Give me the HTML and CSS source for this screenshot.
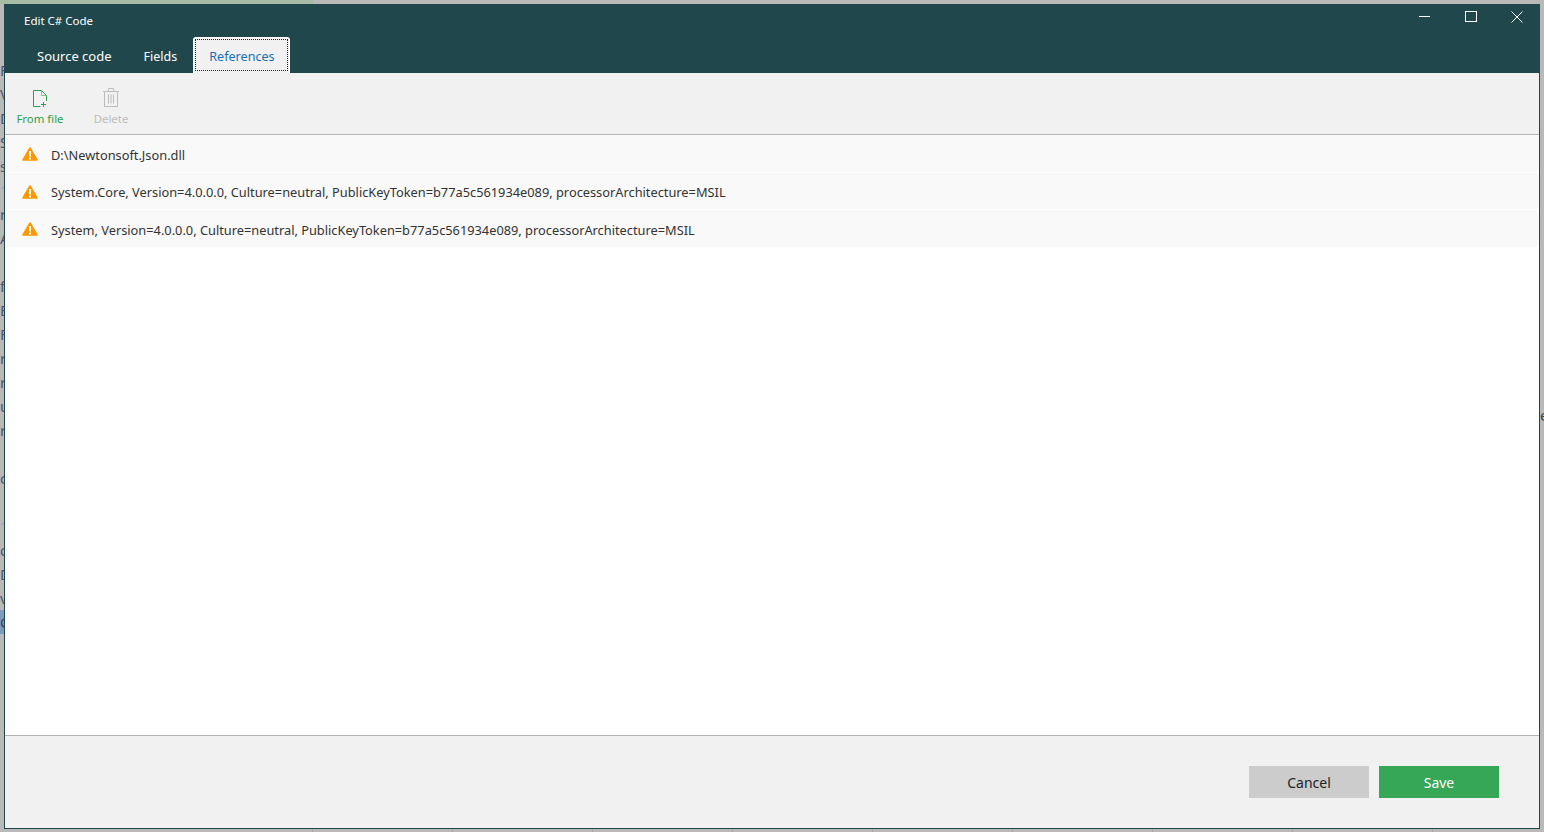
FILE: index.html
```html
<!DOCTYPE html>
<html lang="en">
<head>
<meta charset="utf-8">
<title>Edit C# Code</title>
<link rel="stylesheet" href="styles.css">
</head>
<body>
<div class="backdrop">
  <div class="bd-top"></div>
  <div class="bd-left">
    <span>F</span><span>V</span><span>D</span><span>S</span><span>s</span><span class="faint">1</span><span>r</span><span>A</span><span></span><span>f</span><span>B</span><span>F</span><span>r</span><span>r</span><span>u</span><span>r</span><span></span><span>c</span><span></span><span class="faint">1</span><span>o</span><span>D</span><span>v</span><span class="selected">C</span>
  </div>
  <div class="bd-right">e</div>
  <div class="bd-bottom"></div>
</div>
<div class="window">
  <header class="titlebar">
    <div class="title-row">
      <span class="title">Edit C# Code</span>
      <div class="win-controls">
        <button class="win-btn" aria-label="Minimize"><svg width="12" height="12" viewBox="0 0 12 12"><path d="M0 5.5H11" stroke="#fff" stroke-width="1"/></svg></button>
        <button class="win-btn" aria-label="Maximize"><svg width="12" height="12" viewBox="0 0 12 12"><rect x="0.5" y="0.5" width="11" height="10" fill="none" stroke="#fff" stroke-width="1"/></svg></button>
        <button class="win-btn" aria-label="Close"><svg width="12" height="12" viewBox="0 0 12 12"><path d="M0.5 0.5L11.5 11.5M11.5 0.5L0.5 11.5" stroke="#fff" stroke-width="1"/></svg></button>
      </div>
    </div>
    <nav class="tabs">
      <span class="tab">Source code</span>
      <span class="tab">Fields</span>
      <span class="tab active"><span class="tab-inner">References</span></span>
    </nav>
  </header>
  <div class="toolbar">
    <div class="tool enabled">
      <span class="tool-icon"><svg width="14" height="17" viewBox="0 0 14 17"><path d="M7.5 16.5H.5V.5H8.5L13.5 5.5V11" fill="none" stroke="#2f9e50" stroke-width="1"/><path d="M8.5 .5V5.5H13.5" fill="none" stroke="#2f9e50" stroke-width="1" opacity=".55"/><path d="M8 14.5H13M10.5 12V17" stroke="#2f9e50" stroke-width="1"/></svg></span>
      <span>From file</span>
    </div>
    <div class="tool disabled">
      <span class="tool-icon"><svg width="16" height="19" viewBox="0 0 16 19"><path d="M0 3.5H16M5.5 3.5V.5H10.5V3.5" fill="none" stroke="#bdbdbd"/><rect x="1.5" y="3.5" width="13" height="15" fill="none" stroke="#bdbdbd"/><path d="M5.5 6.5V15.5M8 6.5V15.5M10.5 6.5V15.5" stroke="#bdbdbd"/></svg></span>
      <span>Delete</span>
    </div>
  </div>
  <main class="list">
    <div class="row">
      <svg class="warn" width="16" height="14" viewBox="0 0 16 14"><path d="M8 1L15 13H1Z" fill="#ff9800" stroke="#ff9800" stroke-width="1.6" stroke-linejoin="round"/><rect x="7" y="4" width="2" height="5.5" fill="#fff"/><rect x="7" y="10.5" width="2" height="2" fill="#fff"/></svg>
      <span>D:\Newtonsoft.Json.dll</span>
    </div>
    <div class="row">
      <svg class="warn" width="16" height="14" viewBox="0 0 16 14"><path d="M8 1L15 13H1Z" fill="#ff9800" stroke="#ff9800" stroke-width="1.6" stroke-linejoin="round"/><rect x="7" y="4" width="2" height="5.5" fill="#fff"/><rect x="7" y="10.5" width="2" height="2" fill="#fff"/></svg>
      <span>System.Core, Version=4.0.0.0, Culture=neutral, PublicKeyToken=b77a5c561934e089, processorArchitecture=MSIL</span>
    </div>
    <div class="row">
      <svg class="warn" width="16" height="14" viewBox="0 0 16 14"><path d="M8 1L15 13H1Z" fill="#ff9800" stroke="#ff9800" stroke-width="1.6" stroke-linejoin="round"/><rect x="7" y="4" width="2" height="5.5" fill="#fff"/><rect x="7" y="10.5" width="2" height="2" fill="#fff"/></svg>
      <span>System, Version=4.0.0.0, Culture=neutral, PublicKeyToken=b77a5c561934e089, processorArchitecture=MSIL</span>
    </div>
  </main>
  <footer class="footer">
    <button class="btn cancel">Cancel</button>
    <button class="btn save">Save</button>
  </footer>
</div>
</body>
</html>
```
FILE: styles.css
```css
* { box-sizing: border-box; }
html, body { margin: 0; height: 100%; overflow: hidden; }
body {
  position: relative;
  background: #b9b9b9;
  font-family: "Noto Sans", "Open Sans", sans-serif;
  font-size: 13px;
  padding: 4px 4px 3px 4px;
}
.backdrop { position: absolute; inset: 0; overflow: hidden; }
.bd-top { position: absolute; left: 0; top: 0; width: 313px; height: 4px; background: #a8bba5; }
.bd-left { position: absolute; left: 0; top: 58px; width: 5px; display: flex; flex-direction: column; overflow: hidden; }
.bd-left span { display: block; height: 24px; line-height: 24px; font-size: 15px; color: #4d5570; white-space: nowrap; }
.bd-left .faint { color: #8ba7c4; }
.bd-left .selected { background: #7d9cbc; color: #3a4560; }
.bd-right { position: absolute; right: -4px; top: 405px; width: 8px; height: 20px; line-height: 20px; font-size: 15px; color: #444; overflow: hidden; }
.bd-bottom {
  position: absolute; left: 312px; right: 0; bottom: 0; height: 3px;
  background: repeating-linear-gradient(90deg, #a9a9a9 0 1px, transparent 1px 140px);
}
.window {
  position: relative;
  height: 825px;
  display: flex;
  flex-direction: column;
  border: 1px solid #1f474c;
  border-top: 0;
  background: #fff;
}
.titlebar { background: #1f474c; height: 69px; margin: 0 -1px; display: flex; flex-direction: column; }
.title-row { display: flex; justify-content: space-between; height: 33px; }
.title { color: #fff; font-size: 11.5px; padding: 8px 0 0 20px; line-height: 17px; }
.win-controls { display: flex; }
.win-btn { width: 46px; height: 25px; background: none; border: 0; padding: 0; display: flex; align-items: center; justify-content: center; }
.tabs { display: flex; flex: 1; padding-left: 17px; align-items: flex-end; }
.tab { color: #fff; font-size: 13px; height: 36px; padding: 0 16px; line-height: 38px; }
.tab:nth-child(2) { font-size: 12.5px; padding-right: 15px; line-height: 39px; }
.tab.active { margin-left: 1px; background: #f1f1f1; color: #1a6fb5; border: 1px solid #fff; border-bottom: 0; border-radius: 3px 3px 0 0; padding: 1px 1px 2px; font-size: 12.6px; }
.tab-inner { display: block; height: 100%; padding: 0 16px 0 13px; border: 1px dotted #222; line-height: 34px; width: 93px; text-align: center; }
.toolbar { background: #f1f1f1; height: 62px; border-bottom: 1px solid #b5b5b5; display: flex; padding-top: 14px; }
.tool { width: 70px; display: flex; flex-direction: column; align-items: center; gap: 4px; font-size: 11.4px; line-height: 16px; }
.tool-icon { height: 20px; display: flex; align-items: flex-end; }
.tool svg { display: block; }
.tool.enabled { color: #2f9e50; }
.tool.disabled { color: #bdbdbd; margin-left: 1px; }
.list { flex: 1; display: flex; flex-direction: column; }
.row { height: 37.5px; background: #f9f9f9; display: flex; align-items: center; padding: 3px 0 0 17px; color: #333; font-size: 12.8px; border-bottom: 1px solid #fff; gap: 13px; }
.warn { flex: none; margin-top: -1px; }
.footer { height: 93px; background: #f1f1f1; border-top: 1px solid #b5b5b5; display: flex; justify-content: flex-end; align-items: flex-start; padding: 30px 40px 0 0; gap: 10px; }
.btn { width: 120px; height: 32px; border: 0; font-family: inherit; font-size: 14px; padding: 0; }
.cancel { background: #cccccc; color: #222; }
.save { background: #36a657; color: #fff; }
```
